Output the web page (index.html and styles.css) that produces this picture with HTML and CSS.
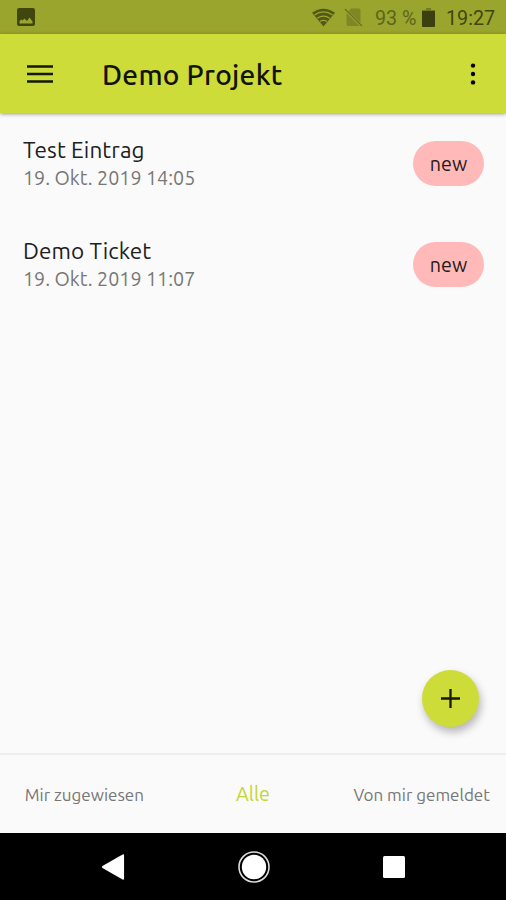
FILE: index.html
```html
<!DOCTYPE html>
<html lang="de">
<head>
    <meta charset="UTF-8">
    <meta name="viewport" content="width=device-width, initial-scale=1">
    <title>Demo Projekt</title>
    <link rel="stylesheet" href="styles.css">
</head>
<body>
    <div class="status-bar">
        <svg class="picture" width="18" height="18" viewBox="0 0 18 18">
            <path fill-rule="evenodd" d="M2 0h14q2 0 2 2v14q0 2-2 2H2q-2 0-2-2V2q0-2 2-2zM2.500 15.500h13v-2l-3-4-2.500 3.500-1.200-1-1.300-1.500-2 2-1.500-1-1.500 2z"/>
        </svg>
        <svg class="wifi" width="23" height="19" viewBox="0 0 24 19">
            <path class="wifi-base" d="M0 4.500Q12-4 24 4.500L12 19z"/>
            <path class="wifi-arcs" d="M2.500 6.800Q12 .5 21.500 6.800M5.500 10.300Q12 6 18.500 10.300M8.300 13.700Q12 11.300 15.700 13.700"/>
        </svg>
        <svg class="sim" width="19" height="19" viewBox="0 0 19 19">
            <path d="M7 .5h8q1.500 0 1.500 1.500v12.700L4.800 3.200zM2.500 5l13 13h-11q-2 0-2-2z"/>
            <path class="slash" d="M1 1l17 17"/>
        </svg>
        <span class="percent">93 %</span>
        <svg class="battery" width="13" height="19" viewBox="0 0 13 19">
            <path class="cap" d="M4 0h5v2h4v2H0V2h4z"/>
            <path d="M0 3h13v15q0 1-1 1H1q-1 0-1-1z"/>
        </svg>
        <span class="time">19:27</span>
    </div>

    <header class="app-bar">
        <svg class="menu" width="26" height="18" viewBox="0 0 26 18">
            <path d="M0 1.500h26M0 9h26M0 16.500h26"/>
        </svg>
        <h1>Demo Projekt</h1>
        <svg class="more" width="6" height="22" viewBox="0 0 6 22">
            <circle cx="3" cy="2.600" r="2.200"/>
            <circle cx="3" cy="11" r="2.200"/>
            <circle cx="3" cy="19.400" r="2.200"/>
        </svg>
    </header>

    <main class="tickets">
        <div class="ticket">
            <div>
                <div class="name">Test Eintrag</div>
                <div class="date">19. Okt. 2019 14:05</div>
            </div>
            <span class="state">new</span>
        </div>
        <div class="ticket">
            <div>
                <div class="name">Demo Ticket</div>
                <div class="date">19. Okt. 2019 11:07</div>
            </div>
            <span class="state">new</span>
        </div>
        <button class="add">
            <svg width="19" height="19" viewBox="0 0 19 19"><path d="M9.500 0v19M0 9.500h19"/></svg>
        </button>
    </main>

    <nav class="tabs">
        <span class="tab">Mir zugewiesen</span>
        <span class="tab active">Alle</span>
        <span class="tab">Von mir gemeldet</span>
    </nav>

    <div class="nav-bar">
        <svg width="24" height="28" viewBox="0 0 25 28"><path d="M1.500 13 22.500 1q1.500-.7 1.500 1v24q0 1.700-1.500 1L1.500 15q-1.500-1 0-2z"/></svg>
        <svg width="32" height="32" viewBox="0 0 32 32">
            <circle class="ring" cx="16" cy="16" r="15"/>
            <circle cx="16" cy="16" r="12.200"/>
        </svg>
        <svg width="22" height="22" viewBox="0 0 22 22"><rect width="22" height="22" rx="1.500"/></svg>
    </div>
</body>
</html>
```
FILE: styles.css
```css
:root {
    --lime: #cddc39;
    --dark-lime: #9aa52d;
    --light-bg: #fafafa;
}
* {
    box-sizing: border-box;
}
body {
    margin: 0;
    height: 900px;
    display: flex;
    flex-direction: column;
    background: var(--light-bg);
    font-family: Ubuntu, "Noto Sans", sans-serif;
    white-space: nowrap;
    overflow: hidden;
}
svg {
    display: block;
    flex: none;
}
.status-bar {
    height: 34px;
    padding: 0 11px 0 17px;
    display: flex;
    align-items: center;
    background: var(--dark-lime);
    font-family: Roboto, sans-serif;
    font-size: 19.7px;
}
.picture {
    fill: #41460f;
}
.wifi {
    margin-left: auto;
}
.wifi-base {
    fill: #535a18;
}
.wifi-arcs {
    fill: none;
    stroke: var(--dark-lime);
    stroke-width: 1.2;
}
.sim {
    margin-left: 9px;
    fill: #7e8725;
}
.slash {
    stroke: #6b7320;
    stroke-width: 1.5;
}
.percent {
    width: 41px;
    margin-left: 12px;
    padding-top: 3px;
    color: #5d641b;
}
.battery {
    margin-left: 6px;
    fill: #3b400e;
}
.cap {
    fill: #747c23;
}
.time {
    width: 49px;
    margin-left: 11px;
    padding-top: 3px;
    color: #41460f;
}
.app-bar {
    height: 79px;
    padding: 0 30px 0 27px;
    display: flex;
    align-items: center;
    background: var(--lime);
    box-shadow: 0 1px 4px rgba(0,0,0,0.4);
}
.menu {
    fill: none;
    stroke: #151704;
    stroke-width: 2.4;
}
.more {
    margin-left: auto;
}
h1 {
    margin: 0 0 0 49px;
    padding-top: 1px;
    font-size: 28px;
    font-weight: 500;
    letter-spacing: 0.3px;
    color: #111303;
}
.tickets {
    flex: 1;
    position: relative;
}
.ticket {
    height: 101px;
    padding: 0 22px 0 23px;
    display: flex;
    align-items: center;
    justify-content: space-between;
}
.name {
    padding-top: 2px;
    font-size: 22.5px;
    line-height: 28px;
    letter-spacing: 0.1px;
    color: #202020;
}
.date {
    font-size: 19.7px;
    line-height: 29px;
    color: #777;
}
.state {
    width: 71px;
    height: 45px;
    border-radius: 23px;
    display: flex;
    align-items: center;
    justify-content: center;
    background: #ffb9b9;
    color: #251818;
    font-size: 19.7px;
}
/* floats above the list */
.add {
    position: absolute;
    right: 27px;
    bottom: 26px;
    width: 57px;
    height: 57px;
    padding: 0 1px 1px 0;
    border: none;
    border-radius: 50%;
    display: flex;
    align-items: center;
    justify-content: center;
    background: var(--lime);
    box-shadow: 2px 5px 8px rgba(0,0,0,0.28);
}
.add path {
    stroke: #171904;
    stroke-width: 2.3;
}
.tabs {
    height: 80px;
    border-top: 2px solid #eee;
    display: grid;
    grid-template-columns: 1fr 1fr 1fr;
    align-items: center;
    text-align: center;
}
.tab {
    font-size: 17px;
    color: #777;
}
.active {
    padding-bottom: 1px;
    font-size: 19.7px;
    color: #c3d534;
}
.nav-bar {
    height: 67px;
    padding: 0 101px;
    display: flex;
    align-items: center;
    justify-content: space-between;
    background: #000;
    fill: #fff;
}
.ring {
    fill: none;
    stroke: #ddd;
    stroke-width: 1.6;
}
```
